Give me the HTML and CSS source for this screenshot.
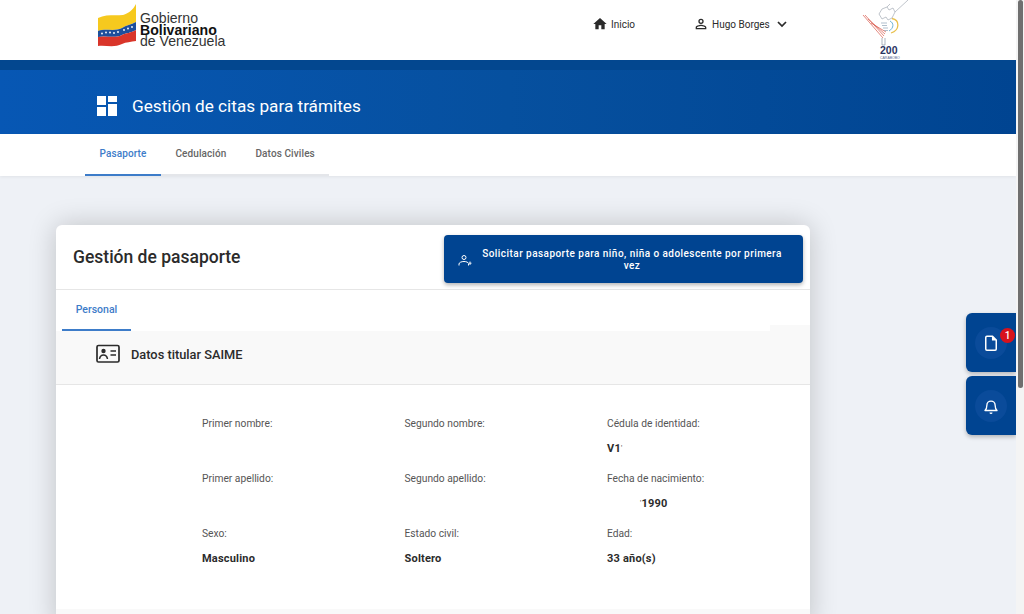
FILE: index.html
```html
<!DOCTYPE html>
<html lang="en">

<head>
  <meta charset="UTF-8">
  <meta name="viewport" content="width=device-width, initial-scale=1.0">
  <title>Gestión de citas para trámites</title>
  <link rel="stylesheet" href="styles.css">
</head>

<body>
  <header class="topbar">
    <div class="brand">
      <svg class="flag" width="40" height="44" viewBox="0 0 40 44">
        <path d="M0 14C8 10 18 12 25 11C31 9 35 6 38 0V18C33 21 28 21 24 24C16 28 8 24 0 27Z" fill="#f6c91e"/>
        <path d="M0 27C8 24 16 28 24 24C28 21 33 21 38 18V26C33 29 28 29 24 31C16 35 8 31 0 33Z" fill="#1d4f9c"/>
        <path d="M0 33C8 31 16 35 24 31C28 29 33 29 38 26V37C33 38 28 38 24 40C16 44 8 41 0 42Z" fill="#d9352a"/>
        <g fill="#fff">
          <circle cx="4" cy="29.500" r=".9"/>
          <circle cx="8" cy="28.500" r=".9"/>
          <circle cx="12" cy="28.500" r=".9"/>
          <circle cx="16" cy="29" r=".9"/>
          <circle cx="20" cy="28" r=".9"/>
          <circle cx="26" cy="26" r=".9"/>
          <circle cx="30" cy="24.500" r=".9"/>
          <circle cx="34" cy="23" r=".9"/>
        </g>
      </svg>
      <div class="brand-text">
        <span>Gobierno</span>
        <strong>Bolivariano</strong>
        <span>de Venezuela</span>
      </div>
    </div>

    <nav class="topnav">
      <a class="topnav-link home-link" href="#">
        <svg width="16" height="16" viewBox="0 0 24 24"><path d="M10 20v-6h4v6h5v-8h3L12 3 2 12h3v8z" fill="#2b2b2b"/></svg>
        Inicio
      </a>
      <a class="topnav-link user-link" href="#">
        <svg width="16" height="16" viewBox="0 0 24 24"><path d="M12 6a2 2 0 1 1 0 4 2 2 0 0 1 0-4m0 9c2.700 0 5.800 1.290 6 2v1H6v-.99c.2-.72 3.300-2.010 6-2.010M12 4a4 4 0 1 0 0 8 4 4 0 0 0 0-8zm0 9c-2.670 0-8 1.340-8 4v3h16v-3c0-2.660-5.330-4-8-4z" fill="#2b2b2b"/></svg>
        Hugo Borges
        <svg class="chevron" width="16" height="16" viewBox="0 0 24 24"><path d="M6 9l6 6 6-6" fill="none" stroke="#2b2b2b" stroke-width="2.600"/></svg>
      </a>
    </nav>

    <svg class="anniversary" width="50" height="60" viewBox="0 0 50 60">
      <g fill="none" stroke-width=".7">
        <path d="M1 15L21 38M3 15L22 36M6 19L23 34M9 23L24 32" stroke="#d9574a"/>
        <path d="M46 0L33 12L31 8L27 10L25 7L20 9L17 14L20 19L24 17L26 20L30 18L33 12M25 7L28 4" stroke="#a3abb5"/>
        <path d="M19 23H25M20 25.500H25M21 28H26M22 30.500H26" stroke="#8fa5b8"/>
        <path d="M20 38V45H23V38" stroke="#8a95a3"/>
        <path d="M30 18.500C38 20 38 30 29 33" stroke="#e8c04c" stroke-width="1.300"/>
        <path d="M28 21C32 23 32 28 27 31" stroke="#6db3d6" stroke-width="1"/>
      </g>
      <text x="18" y="53.500" class="anniversary-num">200</text>
      <text x="18" y="58.500" class="anniversary-sub">CARABOBO</text>
    </svg>
  </header>

  <section class="banner">
    <svg class="banner-icon" width="20" height="20" viewBox="0 0 20 20">
      <path d="M0 0h9v9H0zM11 0h9v6h-9zM0 11h9v9H0zM11 8h9v12h-9z" fill="#fff"/>
    </svg>
    <h1>Gestión de citas para trámites</h1>
  </section>

  <div class="tabs-bar">
    <div class="tabs">
      <a class="tab tab-active" href="#">Pasaporte</a>
      <a class="tab" href="#">Cedulación</a>
      <a class="tab" href="#">Datos Civiles</a>
    </div>
  </div>

  <main class="content">
    <div class="card">
      <div class="card-head">
        <h2>Gestión de pasaporte</h2>
        <button class="request-btn" type="button">
          <svg width="14" height="14" viewBox="0 0 14 14" fill="none" stroke="#fff" stroke-width="1">
            <circle cx="6" cy="4.500" r="2"/>
            <path d="M1 12.500V11C1 9.500 3.500 8.500 6 8.500S10 9.300 10.500 10.500M10.500 12.500V11"/>
            <path d="M12 8.500V12M10.500 10.200H13.500" stroke-width=".9"/>
          </svg>
          <span>Solicitar pasaporte para niño, niña o adolescente por primera vez</span>
        </button>
      </div>

      <div class="subtabs">
        <a class="subtab" href="#">Personal</a>
        <div class="subtabs-notch"></div>
      </div>

      <div class="section-head">
        <svg width="24" height="20" viewBox="0 0 24 20">
          <rect x="1" y="1.500" width="22" height="16.500" rx="1.500" fill="none" stroke="#2b2b2b" stroke-width="1.700"/>
          <circle cx="7.500" cy="7" r="2.200" fill="#2b2b2b"/>
          <path d="M3.500 15c.5-3 2-4 4-4s3.500 1 4 4" fill="none" stroke="#2b2b2b" stroke-width="1.500"/>
          <path d="M14.500 7h5.500M14.500 11h5.500" stroke="#2b2b2b" stroke-width="1.500"/>
        </svg>
        <h3>Datos titular SAIME</h3>
      </div>

      <div class="details">
        <div class="field"><label>Primer nombre:</label><b></b></div>
        <div class="field"><label>Segundo nombre:</label><b></b></div>
        <div class="field"><label>Cédula de identidad:</label><b>V1<i class="tick">'</i></b></div>
        <div class="field"><label>Primer apellido:</label><b></b></div>
        <div class="field"><label>Segundo apellido:</label><b></b></div>
        <div class="field"><label>Fecha de nacimiento:</label><b class="birth"><i class="tick">'</i>1990</b></div>
        <div class="field"><label>Sexo:</label><b>Masculino</b></div>
        <div class="field"><label>Estado civil:</label><b>Soltero</b></div>
        <div class="field"><label>Edad:</label><b>33 año(s)</b></div>
      </div>

      <div class="card-foot"></div>
    </div>
  </main>

  <aside class="side-actions">
    <a class="side-btn" href="#">
      <span class="side-circle">
        <svg width="18" height="18" viewBox="0 0 24 24"><path d="M6.500 3H14l5 5v12a1.500 1.500 0 0 1-1.500 1.500h-11A1.500 1.500 0 0 1 5 20V4.500A1.500 1.500 0 0 1 6.500 3z" fill="none" stroke="#fff" stroke-width="2"/><path d="M14 3v5h5" fill="#fff" stroke="#fff" stroke-width="1.500"/></svg>
      </span>
      <span class="badge">1</span>
    </a>
    <a class="side-btn" href="#">
      <span class="side-circle">
        <svg width="18" height="18" viewBox="0 0 24 24"><path d="M4 18c2-2 2.500-3 2.500-7a5.500 5.500 0 0 1 11 0c0 4 .5 5 2.500 7z" fill="none" stroke="#fff" stroke-width="1.800" stroke-linejoin="round"/><path d="M10 20.500a2 2 0 0 0 4 0z" fill="#fff"/></svg>
      </span>
    </a>
  </aside>

  <div class="scrollbar"><div class="scrollbar-thumb"></div></div>
</body>

</html>
```
FILE: styles.css
```css
:root {
  --primary-color: #004491;
  --accent-color: #3d7cc9;
  --dark-color: #2b2b2b;
  --page-color: #eef1f6;
}

* {
  margin: 0;
  padding: 0;
  box-sizing: border-box;
}

html,
body {
  height: 614px;
  overflow: hidden;
}

body {
  font-family: Roboto, 'Liberation Sans', sans-serif;
  background-color: var(--page-color);
  color: var(--dark-color);
  padding-right: 8px;
  position: relative;
}

a {
  text-decoration: none;
  color: inherit;
}

.topbar {
  height: 60px;
  background: white;
  display: flex;
  align-items: center;
  padding-left: 98px;
}

.brand {
  display: flex;
  align-items: center;
  gap: 2px;
  width: 495px;
}

.flag {
  margin-top: -8px;
}

.brand-text {
  display: flex;
  flex-direction: column;
  font-family: 'Liberation Sans', sans-serif;
  font-size: 14.100px;
  line-height: 11.500px;
  color: #333;
  margin-top: 1px;
}

.brand-text strong {
  color: #111;
}

.topnav {
  display: flex;
  align-items: center;
  font-size: 10px;
  width: 269px;
  padding-bottom: 12px;
}

.topnav-link {
  display: flex;
  align-items: center;
  gap: 3px;
}

.home-link {
  width: 101px;
  margin-left: -1px;
}

.chevron {
  margin-left: 1px;
}

.anniversary {
  flex-shrink: 0;
}

.anniversary-num {
  font-family: 'Liberation Sans', sans-serif;
  font-size: 10.500px;
  font-weight: 700;
  fill: #2a3563;
}

.anniversary-sub {
  font-family: 'Liberation Sans', sans-serif;
  font-size: 3.500px;
  fill: #5a6a90;
}

.banner {
  height: 74px;
  background: linear-gradient(90deg, #0757b4 0%, #06509f 50%, #004491 100%);
  border-top: 10px solid #03478f;
  display: flex;
  align-items: center;
  gap: 15px;
  padding: 8px 0 0 97px;
  color: white;
}

.banner h1 {
  font-size: 17.200px;
  font-weight: 400;
}

.tabs-bar {
  height: 42px;
  background: white;
  padding-left: 85px;
  box-shadow: 0 1px 3px rgba(0, 0, 0, 0.06);
}

.tabs {
  display: flex;
  width: 244px;
  height: 100%;
  border-bottom: 2px solid #e4e6ea;
  font-size: 10px;
  font-weight: 500;
  letter-spacing: 0.1px;
  color: #666;
}

.tab {
  height: 42px;
  display: flex;
  align-items: center;
  padding: 0 14.500px 3px;
  white-space: nowrap;
}

.tab-active {
  color: var(--accent-color);
  border-bottom: 2px solid var(--accent-color);
  padding-bottom: 1px;
}

.content {
  padding: 49px 206px 0 56px;
}

.card {
  background: white;
  border-radius: 6px;
  box-shadow: 0 0 28px rgba(0, 0, 0, 0.2);
}

.card-head {
  height: 65px;
  display: flex;
  align-items: flex-start;
  justify-content: space-between;
  border-bottom: 1px solid #e6e6e6;
  padding: 10px 7px 0 17px;
}

.card-head h2 {
  font-size: 17.500px;
  font-weight: 500;
  margin-top: 12px;
}

.request-btn {
  width: 359px;
  height: 48px;
  background-color: var(--primary-color);
  color: white;
  border: none;
  border-radius: 4px;
  box-shadow: 0 2px 4px rgba(0, 0, 0, 0.3);
  display: flex;
  align-items: center;
  gap: 8px;
  padding: 2px 19px 0 14px;
  font-family: inherit;
  font-size: 10px;
  font-weight: 500;
  letter-spacing: 0.45px;
  line-height: 12px;
}

.request-btn svg {
  flex-shrink: 0;
}

.request-btn span {
  text-align: center;
}

.subtabs {
  height: 41px;
  padding-left: 6px;
  display: flex;
  justify-content: space-between;
  align-items: flex-end;
}

.subtab {
  display: flex;
  align-items: center;
  justify-content: center;
  width: 69px;
  height: 41px;
  padding-bottom: 1px;
  font-size: 10.500px;
  font-weight: 500;
  color: var(--accent-color);
  border-bottom: 2px solid var(--accent-color);
}

.subtabs-notch {
  width: 40px;
  height: 6px;
  background: #f9f9f9;
}

.section-head {
  height: 54px;
  background: #f9f9f9;
  border-bottom: 1px solid #e6e6e6;
  display: flex;
  align-items: center;
  gap: 11px;
  padding: 0 0 7px 40px;
}

.section-head h3 {
  font-size: 12.800px;
  font-weight: 500;
}

.details {
  display: grid;
  grid-template-columns: 202.500px 202.500px 1fr;
  grid-auto-rows: 55px;
  padding: 32px 0 0 146px;
  height: 224px;
  font-size: 10.250px;
}

.field label {
  display: block;
  height: 25px;
  color: #555;
}

.field b {
  font-size: 11px;
  font-weight: 700;
  letter-spacing: 0.2px;
}

.tick {
  font-size: 7px;
  font-style: normal;
  font-weight: 400;
  vertical-align: 2px;
}

.birth {
  padding-left: 33px;
}

.card-foot {
  height: 20px;
  background: #f9f9f9;
}

.side-actions {
  position: absolute;
  top: 313px;
  right: 8px;
  width: 50px;
  display: flex;
  flex-direction: column;
  gap: 4px;
}

.side-btn {
  position: relative;
  height: 59px;
  background-color: var(--primary-color);
  border-radius: 6px 0 0 6px;
  box-shadow: 0 2px 4px rgba(0, 0, 0, 0.25);
  display: flex;
  align-items: center;
  padding-left: 9px;
}

.side-circle {
  width: 32px;
  height: 32px;
  border-radius: 50%;
  background: #0a4b9a;
  display: flex;
  align-items: center;
  justify-content: center;
}

.badge {
  position: absolute;
  top: 15px;
  right: 1px;
  width: 15px;
  height: 15px;
  border-radius: 50%;
  background: #d8121c;
  color: white;
  font-size: 10px;
  font-weight: 500;
  display: flex;
  align-items: center;
  justify-content: center;
}

.scrollbar {
  position: absolute;
  top: 0;
  right: 0;
  width: 8px;
  height: 614px;
  background: #f4f4f4;
}

.scrollbar-thumb {
  width: 5px;
  height: 388px;
  margin-left: 2px;
  background: #6f6f6f;
  border-radius: 3px;
}
```
